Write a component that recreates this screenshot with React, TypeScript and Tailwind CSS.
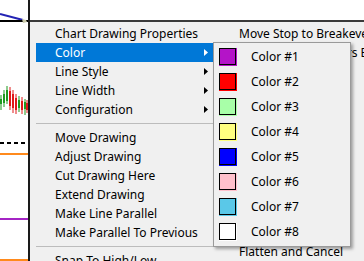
import React from "react";

const candles = [
  { x: 0, top: 99, bottom: 104, high: 95, low: 110, up: true },
  { x: 3, top: 94, bottom: 103, high: 90, low: 107, up: true },
  { x: 6, top: 90, bottom: 101, high: 86, low: 104, up: true },
  { x: 9, top: 91, bottom: 106, high: 87, low: 110, up: false },
  { x: 12, top: 94, bottom: 108, high: 90, low: 113, up: false },
  { x: 15, top: 98, bottom: 110, high: 94, low: 114, up: false },
  { x: 18, top: 100, bottom: 108, high: 96, low: 112, up: true },
  { x: 21, top: 101, bottom: 110, high: 97, low: 114, up: false },
  { x: 24, top: 102, bottom: 109, high: 99, low: 115, up: true },
  { x: 26, top: 103, bottom: 110, high: 100, low: 113, up: false },
];

const mainItems = [
  { label: "Chart Drawing Properties" },
  { label: "Color", sub: true, active: true },
  { label: "Line Style", sub: true },
  { label: "Line Width", sub: true },
  { label: "Configuration", sub: true },
  { sep: true },
  { label: "Move Drawing" },
  { label: "Adjust Drawing" },
  { label: "Cut Drawing Here" },
  { label: "Extend Drawing" },
  { label: "Make Line Parallel" },
  { label: "Make Parallel To Previous" },
  { sep: true },
  { label: "Snap To High/Low" },
];

const colors = [
  { label: "Color #1", fill: "bg-[#b414c8]" },
  { label: "Color #2", fill: "bg-[#ff0000]" },
  { label: "Color #3", fill: "bg-[#a8ffa8]" },
  { label: "Color #4", fill: "bg-[#ffff80]" },
  { label: "Color #5", fill: "bg-[#0000ff]" },
  { label: "Color #6", fill: "bg-[#ffc0cb]" },
  { label: "Color #7", fill: "bg-[#5ac8e8]" },
  { label: "Color #8", fill: "bg-white" },
];

const Arrow: React.FC<{ white?: boolean }> = ({ white }) => (
  <svg width="4" height="7" viewBox="0 0 4 7">
    <polygon points="0,0 4,3.5 0,7" fill={white ? "#ffffff" : "#000000"} />
  </svg>
);

const Chart: React.FC = () => (
  <svg width="28" height="261" className="shrink-0">
    {/* trend line running into the click point */}
    <line x1="0" y1="14" x2="23" y2="20" stroke="#2323b4" strokeWidth="2" />
    <line x1="0" y1="21" x2="28" y2="21" stroke="#000" strokeWidth="2" />
    <polygon points="22,19 26,20 27,22 23,23" fill="#c9c9a8" />

    {candles.map((c) => (
      <g key={c.x}>
        <line
          x1={c.x + 1}
          y1={c.high}
          x2={c.x + 1}
          y2={c.low}
          stroke={c.up ? "#1f9a1f" : "#e01818"}
          strokeWidth="1"
        />
        <rect
          x={c.x}
          y={c.top}
          width="2"
          height={c.bottom - c.top}
          fill={c.up ? "#1f9a1f" : "#e01818"}
        />
      </g>
    ))}

    <line x1="0" y1="143" x2="28" y2="143" stroke="#000" strokeWidth="2" strokeDasharray="4 3" />
    <line x1="0" y1="154" x2="28" y2="154" stroke="#ff8a1c" strokeWidth="2" />
    <line x1="0" y1="219" x2="28" y2="219" stroke="#a424c4" strokeWidth="2" />
    <line x1="0" y1="260" x2="28" y2="260" stroke="#ff8a1c" strokeWidth="2" />
  </svg>
);

export default function App() {
  return (
    <div
      className="w-[364px] h-[261px] overflow-hidden bg-white flex text-[12px] text-black leading-none"
      style={{ fontFamily: '"Segoe UI", "Noto Sans", sans-serif' }}
    >
      <Chart />

      <div className="flex-1 flex flex-col border-l-2 border-[#1a1a1a]">
        <div className="h-[20px] shrink-0" />

        {/* context menu, two columns */}
        <div className="relative flex-1 flex bg-[#f0f0f0] border-t-2 border-[#3a3a3a] pt-[2px]">
          <div className="w-[183px] shrink-0 pl-[6px] flex flex-col">
            {mainItems.map((item, i) =>
              item.sep ? (
                <div key={i} className="h-[9px] flex items-center">
                  <div className="w-full h-px bg-[#bcbcbc]" />
                </div>
              ) : (
                <div
                  key={i}
                  className={`h-[19px] shrink-0 flex items-center justify-between pl-[19px] pr-[5px] whitespace-nowrap ${
                    item.active ? "bg-[#0078d7] text-white" : ""
                  }`}
                >
                  <span>{item.label}</span>
                  {item.sub && <Arrow white={item.active} />}
                </div>
              )
            )}
          </div>

          <div className="flex-1 flex flex-col pl-[26px] whitespace-nowrap">
            <div className="h-[19px] shrink-0 flex items-center">Move Stop to Breakeven</div>
            <div className="h-[19px] shrink-0 flex items-center">Move All Stop Orders Breakeven</div>
            <div className="h-[180px] shrink-0" />
            <div className="h-[19px] shrink-0 flex items-center">Flatten and Cancel</div>
          </div>

          {/* Color submenu */}
          <div className="absolute left-[183px] top-[20px] w-[138px] flex flex-col bg-[#f0f0f0] border border-[#9a9a9a] pt-px pb-[2px] shadow-[2px_2px_3px_rgba(0,0,0,0.35)]">
            {colors.map((c) => (
              <div key={c.label} className="h-[25px] flex items-center pl-[5px] gap-[14px]">
                <div className={`relative w-[18px] h-[18px] ${c.fill}`}>
                  <div className={`absolute left-0 top-0 w-[17px] h-[17px] border border-black ${c.fill}`} />
                </div>
                <span>{c.label}</span>
              </div>
            ))}
          </div>
        </div>
      </div>
    </div>
  );
}
